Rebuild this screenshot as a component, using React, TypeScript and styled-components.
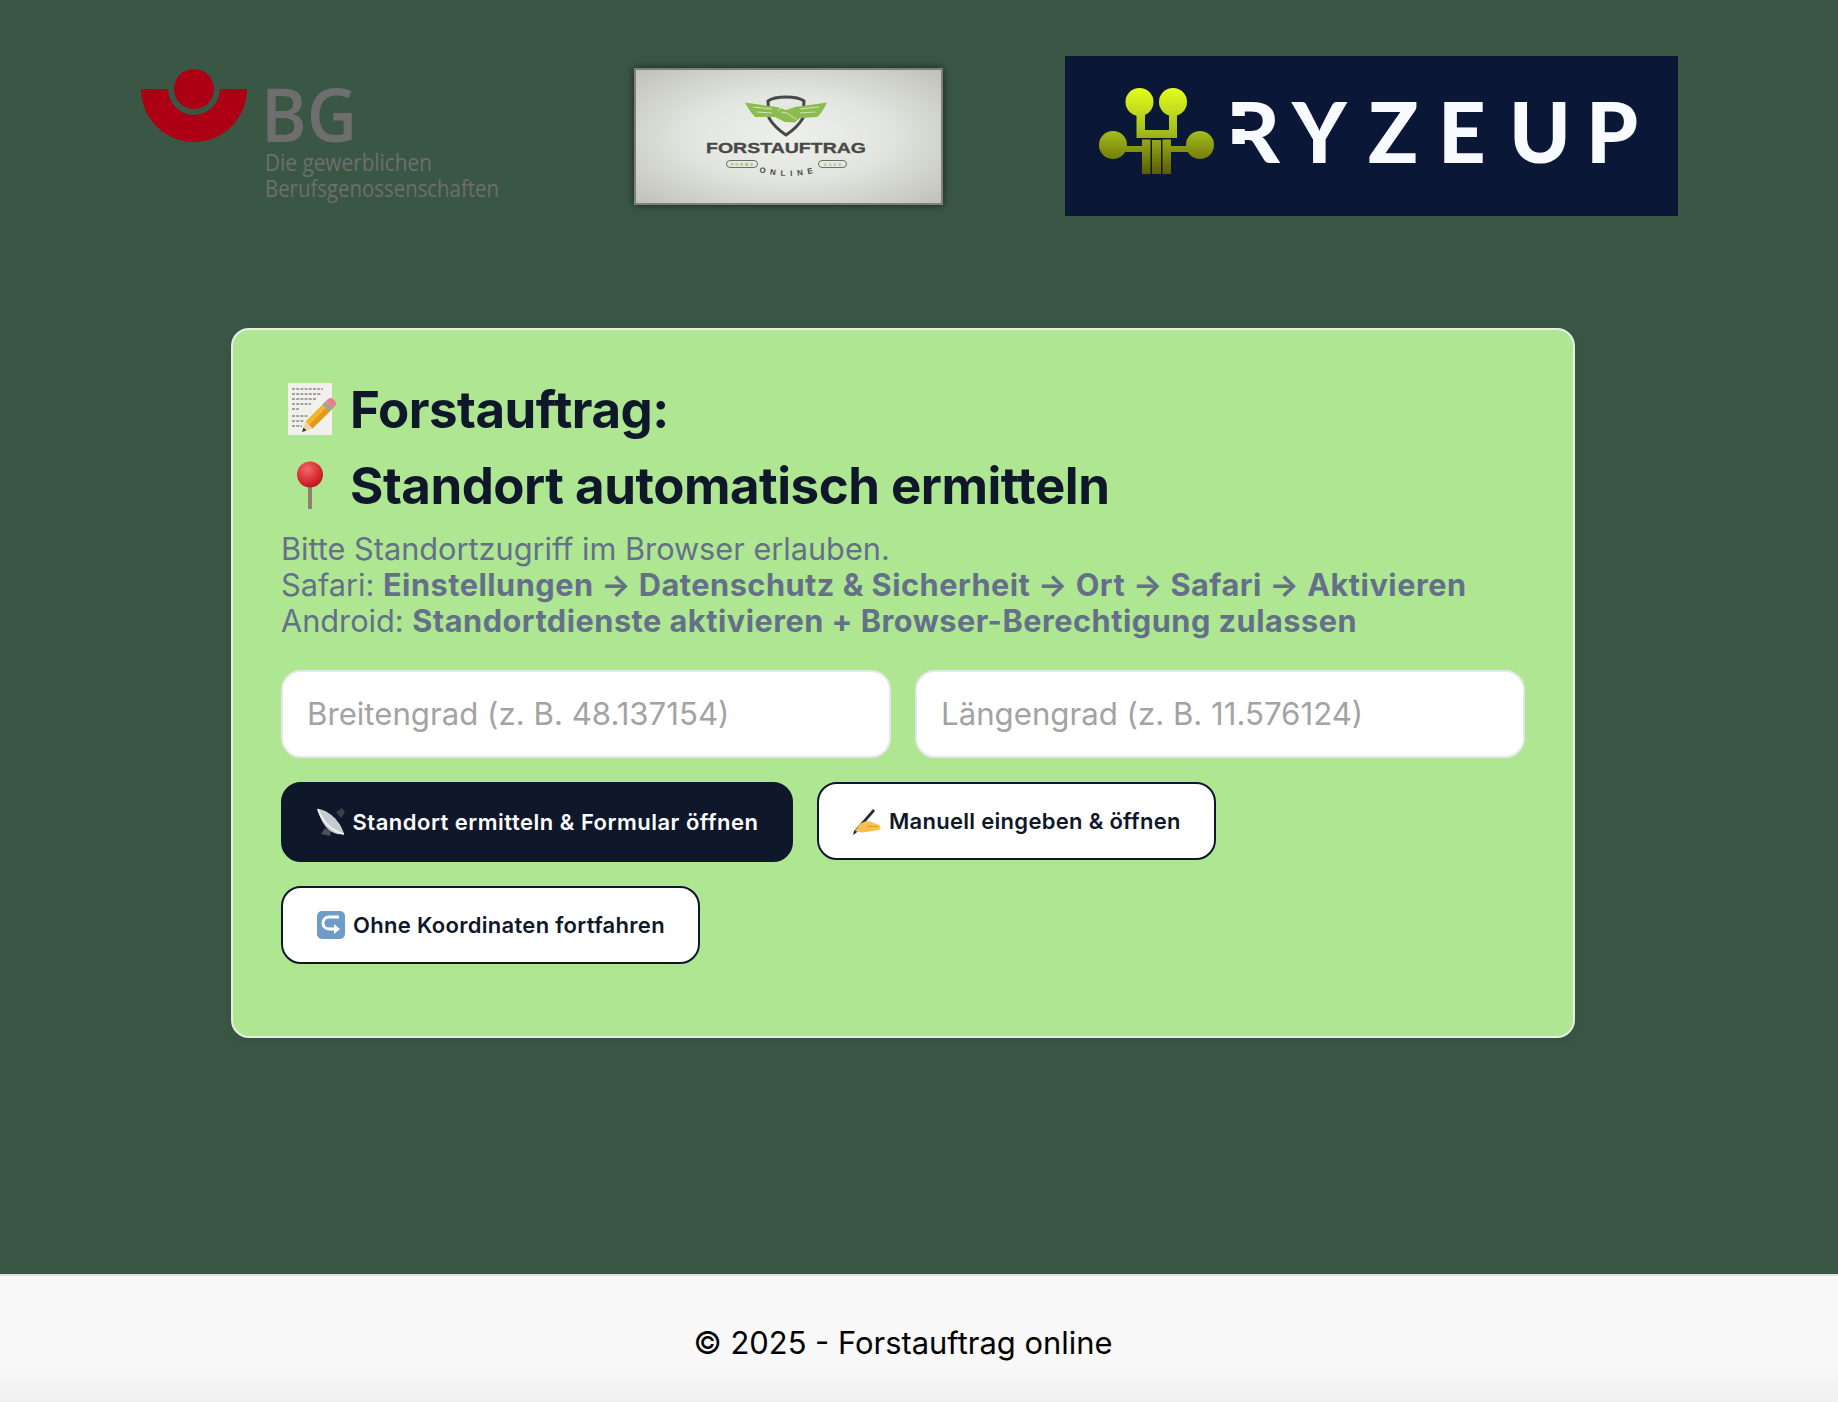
import styled, { createGlobalStyle } from 'styled-components'

const GlobalStyle = createGlobalStyle`
  html, body {
    margin: 0;
    padding: 0;
    background: #3a5745;
    font-family: Inter, "Liberation Sans", sans-serif;
  }
  * {
    box-sizing: border-box;
  }
`

const Page = styled.div`
  min-height: 1402px;
  display: flex;
  flex-direction: column;
`
const Main = styled.main`
  flex: 1;
  padding-right: 32px;
`
const LogoRow = styled.header`
  display: flex;
  align-items: center;
  height: 160px;
  margin-top: 56px;
  padding-left: 141px;
  gap: 122px;
`
const BgLogo = styled.svg`
  width: 371px;
  height: 160px;
  display: block;
`
const CertFrame = styled.div`
  width: 309px;
  height: 137px;
  border: 2px solid #7e817a;
  background: radial-gradient(ellipse at center, #eef0ec 0%, #e3e5e0 45%, #bfc1b9 100%);
  box-shadow: 0 0 8px rgba(0, 0, 0, 0.6);
  overflow: hidden;
`
const CertLogo = styled.svg`
  width: 305px;
  height: 133px;
  display: block;
`
const RyzeLogo = styled.svg`
  width: 613px;
  height: 160px;
  display: block;
`
const Card = styled.section`
  width: 1344px;
  height: 710px;
  margin: 112px auto 0;
  padding: 41px 48px 0;
  background: #afe691;
  border: 2px solid #e7efe2;
  border-radius: 18px;
  box-shadow: 0 4px 14px rgba(0, 0, 0, 0.08);
`
const Title = styled.h1`
  display: flex;
  align-items: center;
  height: 76px;
  margin: 0;
  font-size: 51px;
  font-weight: 700;
  letter-spacing: -0.5px;
  color: #0f172a;
  white-space: nowrap;
`
const TitleIcon = styled.svg`
  width: 60px;
  height: 56px;
  margin-right: 9px;
  flex: none;
`
const Help = styled.p`
  margin: 8px 0 0;
  font-size: 30.7px;
  line-height: 36px;
  color: #64708a;
  white-space: nowrap;

  strong {
    font-weight: 700;
    letter-spacing: 0.5px;
  }
`
const Inputs = styled.div`
  display: grid;
  grid-template-columns: 1fr 1fr;
  gap: 24px;
  margin-top: 31px;
`
const Field = styled.input`
  height: 88px;
  width: 100%;
  padding: 0 24px;
  border: 2px solid #e5e7eb;
  border-radius: 20px;
  background: #fff;
  font-family: Inter, "Liberation Sans", sans-serif;
  font-size: 31.2px;
  color: #0f172a;
  outline: none;

  &::placeholder {
    color: #a3a3a3;
    opacity: 1;
  }
`
const Actions = styled.div`
  display: flex;
  flex-wrap: wrap;
  gap: 24px;
  margin-top: 24px;
`
const Button = styled.button<{ $primary?: boolean }>`
  display: inline-flex;
  align-items: center;
  gap: 7px;
  height: ${(p) => (p.$primary ? 80 : 78)}px;
  padding: 0 ${(p) => (p.$primary ? 32.5 : 33)}px;
  border: 2px solid #0f172a;
  border-radius: 20px;
  background: ${(p) => (p.$primary ? '#0f172a' : '#fff')};
  color: ${(p) => (p.$primary ? '#fff' : '#0f172a')};
  font-family: Inter, "Liberation Sans", sans-serif;
  font-size: 22px;
  font-weight: 600;
  letter-spacing: ${(p) => (p.$primary ? 0.5 : 0.3)}px;
  white-space: nowrap;
`
const ButtonIcon = styled.svg`
  width: 30px;
  height: 30px;
  flex: none;
`
const Footer = styled.footer`
  height: 128px;
  padding: 6px 32px 0 0;
  display: flex;
  align-items: center;
  justify-content: center;
  border-top: 2px solid #dfe1dd;
  background: linear-gradient(#f9f9f9 0%, #f8f8f8 70%, #f0f0f0 100%);
  font-size: 30.9px;
  color: #000;
`

export default function App() {
  return (
    <Page>
      <GlobalStyle />
      <Main>
        <LogoRow>
          <BgLogo viewBox="141 56 371 160">
            <circle cx="194" cy="89" r="20" fill="#ad0014" />
            <path d="M141 89H168A26 26 0 0 0 220 89H247A53 53 0 0 1 141 89Z" fill="#ad0014" />
            <g fill="#6e6e6e" fontFamily="'Open Sans', sans-serif">
              <text x="261" y="142" fontSize="75" fontWeight="600" textLength="96" lengthAdjust="spacingAndGlyphs">BG</text>
              <text x="265" y="171" fontSize="23" fontWeight="500" textLength="167" lengthAdjust="spacingAndGlyphs">Die gewerblichen</text>
              <text x="265" y="197" fontSize="23" fontWeight="500" textLength="234" lengthAdjust="spacingAndGlyphs">Berufsgenossenschaften</text>
            </g>
          </BgLogo>
          <CertFrame>
            <CertLogo viewBox="636 70 305 133">
              <path d="M768 101C772 98 779 97 786 97C793 97 800 98 804 101L803 118C799 125 792 131 786 135C780 131 773 125 769 118Z" fill="none" stroke="#484848" strokeWidth="3" />
              <path d="M745 102.5L777 107L786 110L795 107L827 102.5C824 109 821 114 817 117L800 118L795 122.5L785 122L775 117L755 117C751 113 748 108 745 102.5Z" fill="#8cbb4e" />
              <path d="M778 111L783 105.5L793 108M781 112L787 113L797 120M753 107L772 109M757 112L772 113M800 109L819 107M800 113L815 112" fill="none" stroke="#dbe8c4" strokeWidth="0.9" />
              <text x="706" y="153" fontFamily="'Liberation Sans', sans-serif" fontSize="15.5" fontWeight="700" fill="#484848" stroke="#484848" strokeWidth="0.3" textLength="160" lengthAdjust="spacingAndGlyphs">FORSTAUFTRAG</text>
              <rect x="726.5" y="160.5" width="31" height="7" rx="3.5" fill="none" stroke="#6c6f68" />
              <rect x="818.5" y="160.5" width="28" height="7" rx="3.5" fill="none" stroke="#6c6f68" />
              <text x="731" y="165.5" fontFamily="'Liberation Sans', sans-serif" fontSize="4" fontWeight="700" fill="#8cbb4e" textLength="22">FORMS</text>
              <text x="824" y="165.5" fontFamily="'Liberation Sans', sans-serif" fontSize="4" fontWeight="700" fill="#8cbb4e" textLength="17">2025</text>
              <path id="onlineArc" d="M759 172Q787 180 817 172" fill="none" />
              <text fontFamily="'Liberation Sans', sans-serif" fontSize="8" fontWeight="700" fill="#4a4a4a" letterSpacing="4.9">
                <textPath href="#onlineArc">ONLINE</textPath>
              </text>
            </CertLogo>
          </CertFrame>
          <RyzeLogo viewBox="1065 56 613 160">
            <defs>
              <linearGradient id="ryzeGrad" gradientUnits="userSpaceOnUse" x1="0" y1="88" x2="0" y2="174">
                <stop offset="0" stopColor="#e2ff1e" />
                <stop offset="0.5" stopColor="#a4bd1c" />
                <stop offset="1" stopColor="#5a5c00" />
              </linearGradient>
            </defs>
            <rect x="1065" y="56" width="613" height="160" fill="#0b1736" />
            <g fill="url(#ryzeGrad)">
              <ellipse cx="1139.5" cy="102" rx="14" ry="14" />
              <ellipse cx="1173" cy="102" rx="14" ry="14" />
              <ellipse cx="1113" cy="145" rx="14" ry="14" />
              <ellipse cx="1200" cy="145" rx="14" ry="14" />
              <path d="M1136.5 108H1145V130H1169V108H1177V138H1136.5Z" />
              <path d="M1142 139.5H1150.5V174H1142V152H1124V146H1142Z" />
              <path d="M1162.5 139.5H1171V146H1189V152H1171V174H1162.5Z" />
              <path d="M1152 140H1161V174H1152Z" />
            </g>
            <text y="163" fontFamily="Lato, sans-serif" fontSize="83" fontWeight="900" fill="#f7faff" x="1226 1292 1368 1438 1509 1586">RYZEUP</text>
            {/* the logo's R has no stem: cover it on the navy ground */}
            <rect x="1228" y="116" width="20" height="13" fill="#0b1736" />
            <rect x="1228" y="144" width="20" height="22" fill="#0b1736" />
          </RyzeLogo>
        </LogoRow>

        <Card>
          <Title>
            <TitleIcon viewBox="0 0 60 56">
              <rect x="7" y="2" width="44" height="52" fill="#f1f0ec" />
              <path d="M11 8H42M11 13H40M11 18H36M11 23H30M11 28H18M11 35H27M11 40H23M11 45H21" stroke="#444" strokeWidth="0.9" strokeDasharray="3 1.2" />
              <path d="M24.5 40.5L44.5 20.5L51.5 27.5L31.5 47.5Z" fill="#f3b62b" />
              <path d="M28 44L48 24L51.5 27.5L31.5 47.5Z" fill="#e39a1c" />
              <path d="M24.5 40.5L31.5 47.5L21 51Z" fill="#f0d3a8" />
              <path d="M21 51L22.5 46.5L25.5 49.5Z" fill="#333" />
              <path d="M41.5 23.5L44.5 20.5L51.5 27.5L48.5 30.5Z" fill="#9aa3ad" />
              <path d="M44.5 20.5L47 18C49 16.5 51 17 52.5 18.5L54 20C55.5 21.5 55.5 23.5 54 25L51.5 27.5Z" fill="#e8808a" />
            </TitleIcon>
            Forstauftrag:
          </Title>
          <Title>
            <TitleIcon viewBox="0 0 60 56">
              <defs>
                <radialGradient id="pinHead" cx="0.4" cy="0.3" r="0.8">
                  <stop offset="0" stopColor="#f0696a" />
                  <stop offset="0.6" stopColor="#d92b2f" />
                  <stop offset="1" stopColor="#a01218" />
                </radialGradient>
              </defs>
              <rect x="27" y="26" width="4" height="26" fill="#91806f" />
              <circle cx="29" cy="17.5" r="13" fill="url(#pinHead)" />
            </TitleIcon>
            Standort automatisch ermitteln
          </Title>
          <Help>
            Bitte Standortzugriff im Browser erlauben.
            <br />
            Safari: <strong>Einstellungen → Datenschutz &amp; Sicherheit → Ort → Safari → Aktivieren</strong>
            <br />
            Android: <strong>Standortdienste aktivieren + Browser-Berechtigung zulassen</strong>
          </Help>
          <Inputs>
            <Field placeholder="Breitengrad (z. B. 48.137154)" />
            <Field placeholder="Längengrad (z. B. 11.576124)" />
          </Inputs>
          <Actions>
            <Button $primary>
              <ButtonIcon viewBox="0 0 30 30">
                <path d="M20 5L26 1L29 5L25 11Z" fill="#3c4148" />
                <path d="M9 21L5 27L14 29L15 24Z" fill="#4a5058" />
                <path d="M2 2C12 3 24 13 28 27C18 29 6 22 2 2Z" fill="#c6cbd0" />
                <path d="M2 2C5 12 14 24 28 27" fill="none" stroke="#eef0f2" strokeWidth="2" />
              </ButtonIcon>
              Standort ermitteln &amp; Formular öffnen
            </Button>
            <Button>
              <ButtonIcon viewBox="0 0 30 30">
                <path d="M21 3L23 5L4 27L1 29L2 25Z" fill="#2b2b2b" />
                <path d="M8 18C11 16 14 15 17 15L27 19C29 20 29 23 27 24L14 26C10 27 6 26 3 25Z" fill="#f6c04d" />
                <path d="M15 20.5L26 20.5" stroke="#d89a2b" strokeWidth="1" />
              </ButtonIcon>
              Manuell eingeben &amp; öffnen
            </Button>
            <Button>
              <ButtonIcon viewBox="0 0 30 30">
                <rect x="1" y="1" width="28" height="28" rx="5" fill="#6f9cc6" />
                <path d="M23 7H13C9 7 7 10 7 13C7 16 9 19 13 19H19" fill="none" stroke="#fff" strokeWidth="3" />
                <path d="M18 14L24 19L18 24Z" fill="#fff" />
              </ButtonIcon>
              Ohne Koordinaten fortfahren
            </Button>
          </Actions>
        </Card>
      </Main>
      <Footer>© 2025 - Forstauftrag online</Footer>
    </Page>
  )
}
